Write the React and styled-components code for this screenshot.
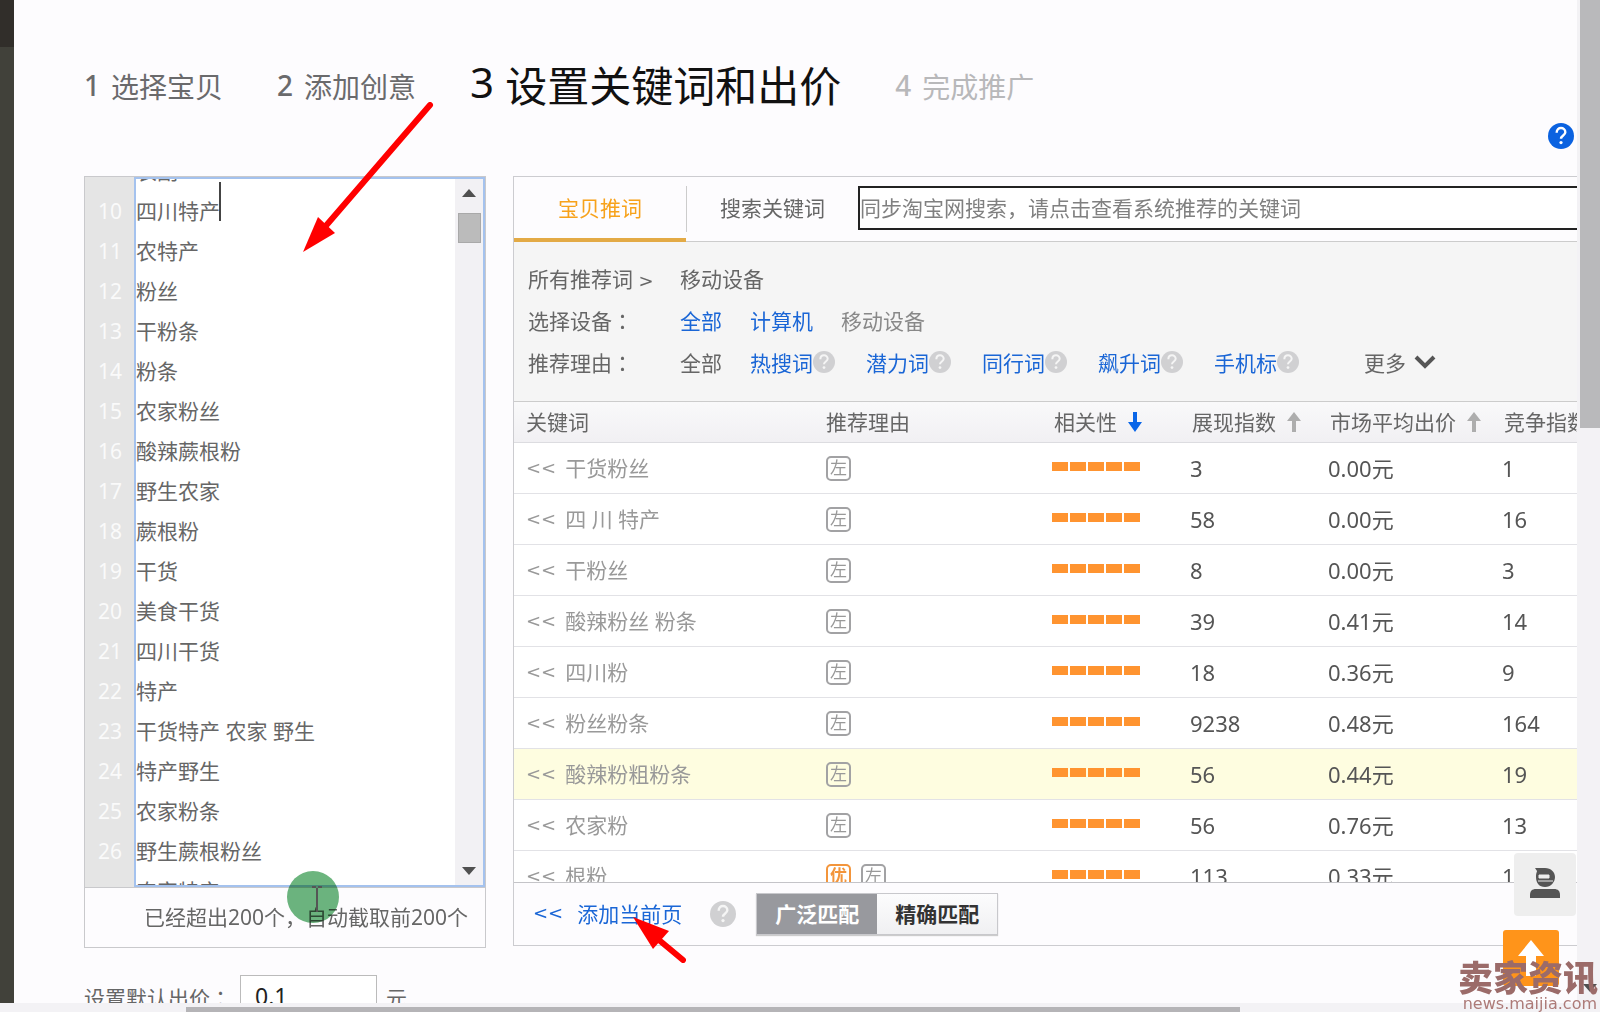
import React, { useEffect, useRef, useState } from 'react';
import styled, { createGlobalStyle } from 'styled-components';

const GlobalStyle = createGlobalStyle`
  * {
    box-sizing: border-box;
  }

  body {
    margin: 0;
    background: #fdfcfe;
    font-family: 'Noto Sans', 'Noto Sans CJK SC', sans-serif;
    font-size: 21px;
    color: #666;
  }

  button, input, textarea {
    font-family: inherit;
    font-size: inherit;
    color: inherit;
    margin: 0;
  }

  a {
    color: #1a66d6;
    text-decoration: none;
  }
`;

const Screen = styled.div`
  position: relative;
  height: 100vh;
  display: grid;
  grid-template-columns: 14px minmax(0, 1fr) 23px;
  grid-template-rows: minmax(0, 1fr) 9px;
  overflow: hidden;
`;

const DarkEdge = styled.div`
  background: #41413a;
  border-top: 47px solid #312e2a;
`;

const Page = styled.main`
  overflow: hidden;
  padding: 43px 0 0 70px;
`;

const PageScroll = styled.div`
  background: #f3f2f5;
  display: flex;
  flex-direction: column;
  align-items: center;
  justify-content: space-between;
  padding: 0 0 11px 3px;
`;

const PageThumb = styled.div`
  align-self: stretch;
  height: 428px;
  background: #b9b9bb;
`;

const BottomScroll = styled.div`
  grid-column: 1 / -1;
  background: #f3f2f5;
  padding: 4px 360px 0 186px;
`;

const BottomThumb = styled.div`
  height: 5px;
  background: #b5b4b7;
`;

const Steps = styled.ol`
  list-style: none;
  display: flex;
  align-items: center;
  height: 80px;
  margin: 0;
  padding: 0;
  white-space: nowrap;
`;

const Step = styled.li`
  display: flex;
  gap: 11px;
  padding-top: ${({ $current }) => ($current ? 0 : 6)}px;
  font-size: ${({ $current }) => ($current ? 42 : 28)}px;
  color: ${({ $current, $todo }) => ($current ? '#111' : $todo ? '#b8b8ba' : '#6a6a6c')};
  margin-right: 54px;
`;

const StepNumber = styled.span`
  font-weight: ${({ $bold }) => ($bold ? 500 : 400)};
`;

const HelpRow = styled.div`
  display: flex;
  justify-content: flex-end;
  align-items: flex-start;
  height: 53px;
  padding-right: 3px;
`;

const HelpButton = styled.button`
  display: flex;
  border: 0;
  padding: 0;
  background: none;
`;

const Columns = styled.div`
  display: grid;
  grid-template-columns: 402px minmax(0, 1fr);
  gap: 27px;
  align-items: start;
`;

const WordPanel = styled.section`
  border: 1px solid #c9c9cc;
`;

const Editor = styled.div`
  display: flex;
  height: 710px;
`;

const Gutter = styled.div`
  width: 49px;
  overflow: hidden;
  display: flex;
  flex-direction: column;
  justify-content: center;
  align-items: flex-end;
  padding: 0 12px 2px 0;
  background: #e5e5e5;
  color: #fafafa;
  line-height: 40px;
`;

const TextBox = styled.div`
  flex: 1;
  display: flex;
  border: 2px solid #a4c2ee;
  background: #fff;
`;

const Words = styled.textarea`
  flex: 1;
  min-width: 0;
  border: 0;
  padding: 0;
  resize: none;
  outline: none;
  overflow: auto;
  scrollbar-width: none;
  background: #fff;
  line-height: 40px;
`;

const Scroller = styled.div`
  width: 28px;
  background: #f2f1f4;
  display: flex;
  flex-direction: column;
  align-items: center;
  padding: 10px 0;
`;

const ScrollThumb = styled.div`
  width: 23px;
  height: 30px;
  margin: 16px 0 auto;
  background: #bbb;
  border: 1px solid #a9a9a9;
`;

const WordFooter = styled.div`
  height: 60px;
  border-top: 1px solid #c9c9cc;
  display: flex;
  align-items: center;
  justify-content: flex-end;
  padding: 0 17px 4px 0;
  white-space: nowrap;
`;

const KeywordPanel = styled.section`
  border: 1px solid #ccccd0;
  border-right: 0;
  overflow: hidden;
`;

const TabBar = styled.div`
  display: flex;
  align-items: center;
  height: 65px;
  border-bottom: 1px solid #ccc;
`;

const Tab = styled.button`
  flex: none;
  width: ${({ $active }) => ($active ? 172 : 171)}px;
  height: 65px;
  border: 0;
  border-bottom: 4px solid ${({ $active }) => ($active ? '#e3aa45' : 'transparent')};
  padding: 0;
  background: none;
  color: ${({ $active }) => ($active ? '#f7a21b' : '#666')};
`;

const TabDivider = styled.span`
  width: 1px;
  height: 46px;
  background: #ccc;
`;

const SearchInput = styled.input`
  flex: 1;
  min-width: 0;
  height: 44px;
  margin-bottom: 3px;
  border: 2px solid #222;
  border-right: 0;
  padding: 0;
  background: #fff;
  outline: none;

  &::placeholder {
    color: #808080;
    opacity: 1;
  }
`;

const Filters = styled.div`
  height: 159px;
  padding: 15px 14px 0;
  background: #f5f5f5;
`;

const FilterRow = styled.div`
  display: flex;
  align-items: center;
  height: 42px;
  white-space: nowrap;
`;

const FilterLabel = styled.span`
  width: 152px;
`;

const Colon = styled.span`
  font-family: 'Noto Sans CJK TC', sans-serif;
  line-height: 1;
`;

const FilterItem = styled.span`
  display: flex;
  align-items: center;
  margin-right: ${({ $wide }) => ($wide ? 31 : 28)}px;
  color: ${({ $muted }) => ($muted ? '#888' : 'inherit')};
`;

const MoreButton = styled.button`
  display: flex;
  align-items: center;
  gap: 8px;
  border: 0;
  padding: 0;
  margin-left: 34px;
  background: none;
`;

const TableBox = styled.div`
  height: 482px;
  overflow: hidden;
  border-top: 1px solid #ccc;
  border-bottom: 1px solid #c4c4c8;
`;

const Table = styled.table`
  width: 100%;
  table-layout: fixed;
  border-collapse: separate;
  border-spacing: 0;
`;

const HeadCell = styled.th`
  width: ${({ $width }) => ($width ? `${$width}px` : 'auto')};
  height: 41px;
  padding: 0 0 0 ${({ $first }) => ($first ? 12 : 14)}px;
  border-bottom: 1px solid #dcdce0;
  background: linear-gradient(#f9f9fa, #f1f0f3);
  font-weight: 400;
  line-height: 30px;
  text-align: left;
  white-space: nowrap;
  overflow: hidden;
`;

const SortLabel = styled.span`
  display: flex;
  align-items: center;
  gap: 11px;
`;

const Row = styled.tr`
  background: ${({ $highlight }) => ($highlight ? '#fefde0' : '#fff')};
`;

const Cell = styled.td`
  height: 51px;
  padding: 0 0 0 12px;
  border-bottom: 1px solid #e2e2e6;
  line-height: 30px;
  font-size: ${({ $number }) => ($number ? 22 : 21)}px;
  color: ${({ $number }) => ($number ? '#555' : '#999')};
  white-space: nowrap;
`;

const Keyword = styled.span`
  display: flex;
  align-items: center;
  gap: 9px;
`;

const Chevrons = styled.span`
  font-family: 'DejaVu Sans', sans-serif;
  font-size: 18px;
  font-weight: 400;
`;

const Tags = styled.span`
  display: flex;
  gap: 10px;
`;

const Tag = styled.span`
  display: flex;
  align-items: center;
  justify-content: center;
  width: 25px;
  height: 25px;
  border: 2px solid ${({ $good }) => ($good ? '#f3953b' : '#a2a2a4')};
  border-radius: 5px;
  color: ${({ $good }) => ($good ? '#f3953b' : '#999')};
  font-size: 17px;
  font-weight: ${({ $good }) => ($good ? 700 : 400)};
`;

const Bars = styled.span`
  display: flex;
  gap: 2px;
  margin-bottom: 4px;
`;

const Bar = styled.i`
  width: 16px;
  height: 9px;
  background: #ff9430;
`;

const PanelFooter = styled.div`
  display: flex;
  align-items: center;
  height: 62px;
  padding-left: 19px;
`;

const AddPage = styled.a`
  display: flex;
  align-items: center;
  gap: 14px;
  margin-right: 28px;
  padding-bottom: 3px;
`;

const MatchGroup = styled.div`
  display: flex;
  margin-left: 20px;
  border: 1px solid #c8c8cc;
  box-shadow: 0 1px 1px #ccc;
`;

const MatchButton = styled.button`
  width: 120px;
  height: 40px;
  border: 0;
  padding: 0 0 3px;
  font-weight: 700;
  background: ${({ $active }) => ($active ? '#98999e' : 'linear-gradient(#fcfcfd, #f0f0f2)')};
  color: ${({ $active }) => ($active ? '#fff' : '#333')};
`;

const PriceRow = styled.div`
  display: flex;
  align-items: center;
  height: 44px;
  margin-top: 27px;
  white-space: nowrap;
`;

const PriceLabel = styled.label`
  width: 156px;
`;

const PriceInput = styled.input`
  width: 137px;
  height: 44px;
  margin-right: 9px;
  border: 1px solid #bbb;
  padding: 0 14px 2px;
  background: #fff;
  color: #222;
  font-size: 23px;
`;

const Floating = styled.div`
  position: absolute;
  right: 24px;
  bottom: 26px;
  display: flex;
  flex-direction: column;
  align-items: flex-end;
  gap: 14px;
`;

const ServiceButton = styled.button`
  display: flex;
  align-items: center;
  justify-content: center;
  width: 62px;
  height: 63px;
  border: 0;
  border-radius: 4px;
  padding: 0 0 4px;
  background: #eee;
`;

const TopButton = styled.button`
  display: flex;
  align-items: center;
  justify-content: center;
  width: 56px;
  height: 56px;
  margin-right: 17px;
  border: 0;
  border-radius: 3px;
  background: #ff941a;
`;

const Watermark = styled.div`
  position: absolute;
  right: 0;
  bottom: 0;
  color: #9b6b69;
  text-align: right;
`;

const WatermarkName = styled.div`
  padding-right: 2px;
  font-size: 35px;
  font-weight: 900;
  line-height: 36px;
`;

const WatermarkUrl = styled.div`
  padding-right: 3px;
  color: #ad7b78;
  font-family: 'DejaVu Sans', sans-serif;
  font-size: 16px;
  line-height: 16px;
`;

const Marks = styled.svg`
  position: absolute;
  left: 0;
  top: 0;
  pointer-events: none;
`;

const ClickSpot = styled.circle`
  mix-blend-mode: multiply;
`;

const words = [
  '农副',
  '四川特产',
  '农特产',
  '粉丝',
  '干粉条',
  '粉条',
  '农家粉丝',
  '酸辣蕨根粉',
  '野生农家',
  '蕨根粉',
  '干货',
  '美食干货',
  '四川干货',
  '特产',
  '干货特产 农家 野生',
  '特产野生',
  '农家粉条',
  '野生蕨根粉丝',
  '农家特产',
  '四川粉条',
];

const lineNumbers = Array.from({ length: 17 }, (_, i) => i + 10);

const reasons = ['热搜词', '潜力词', '同行词', '飙升词', '手机标'];

const rows = [
  { word: '干货粉丝', shows: '3', price: '0.00元', rivals: '1' },
  { word: '四 川 特产', shows: '58', price: '0.00元', rivals: '16' },
  { word: '干粉丝', shows: '8', price: '0.00元', rivals: '3' },
  { word: '酸辣粉丝 粉条', shows: '39', price: '0.41元', rivals: '14' },
  { word: '四川粉', shows: '18', price: '0.36元', rivals: '9' },
  { word: '粉丝粉条', shows: '9238', price: '0.48元', rivals: '164' },
  { word: '酸辣粉粗粉条', shows: '56', price: '0.44元', rivals: '19', highlight: true },
  { word: '农家粉', shows: '56', price: '0.76元', rivals: '13' },
  { word: '根粉', shows: '113', price: '0.33元', rivals: '1', good: true },
];

const HelpIcon = ({ size = 22, color = '#d0d0d2', mark = '#f5f5f5' }) => (
  <svg width={size} height={size} viewBox="0 0 24 24" aria-hidden="true">
    <circle cx="12" cy="12" r="12" fill={color} />
    <path
      d="M8 9c0-6 8-5.500 8-.5 0 3-4 3-4 6"
      fill="none"
      stroke={mark}
      strokeWidth="2.200"
    />
    <circle cx="12" cy="18" r="1.500" fill={mark} />
  </svg>
);

const SortIcon = ({ down }) => (
  <svg width="14" height="20" viewBox="0 0 14 20" aria-hidden="true">
    {down ? (
      <path d="M5 0h4v10h5l-7 10-7-10h5z" fill="#0a66e8" />
    ) : (
      <path d="M5 20h4V9h5L7 0 0 9h5z" fill="#adadad" />
    )}
  </svg>
);

const Triangle = ({ down, color = '#505050' }) => (
  <svg width="14" height="8" viewBox="0 0 14 8" aria-hidden="true">
    <path d={down ? 'M0 0h14L7 8z' : 'M0 8h14L7 0z'} fill={color} />
  </svg>
);

const App = () => {
  const [text, setText] = useState(words.join('\n'));
  const [bid, setBid] = useState('0.1');
  const [match, setMatch] = useState('broad');
  const wordsRef = useRef(null);

  useEffect(() => {
    wordsRef.current.scrollTop = 28;
  }, []);

  return (
    <>
      <GlobalStyle />
      <Screen>
        <DarkEdge />
        <Page>
          <Steps>
            <Step><StepNumber $bold>1</StepNumber>选择宝贝</Step>
            <Step><StepNumber $bold>2</StepNumber>添加创意</Step>
            <Step $current><StepNumber>3</StepNumber>设置关键词和出价</Step>
            <Step $todo><StepNumber $bold>4</StepNumber>完成推广</Step>
          </Steps>
          <HelpRow>
            <HelpButton aria-label="帮助">
              <HelpIcon size={26} color="#0b62e0" mark="#fff" />
            </HelpButton>
          </HelpRow>

          <Columns>
            <WordPanel>
              <Editor>
                <Gutter>
                  {lineNumbers.map((n) => (
                    <span key={n}>{n}</span>
                  ))}
                </Gutter>
                <TextBox>
                  <Words
                    ref={wordsRef}
                    aria-label="关键词"
                    spellCheck="false"
                    value={text}
                    onChange={(e) => setText(e.target.value)}
                  />
                  <Scroller>
                    <Triangle />
                    <ScrollThumb />
                    <Triangle down />
                  </Scroller>
                </TextBox>
              </Editor>
              <WordFooter>已经超出200个，自动截取前200个</WordFooter>
            </WordPanel>

            <KeywordPanel>
              <TabBar>
                <Tab $active>宝贝推词</Tab>
                <TabDivider />
                <Tab>搜索关键词</Tab>
                <SearchInput
                  aria-label="搜索关键词"
                  placeholder="同步淘宝网搜索，请点击查看系统推荐的关键词"
                />
              </TabBar>
              <Filters>
                <FilterRow>
                  <FilterLabel>所有推荐词 <Chevrons>&gt;</Chevrons></FilterLabel>
                  <FilterItem>移动设备</FilterItem>
                </FilterRow>
                <FilterRow>
                  <FilterLabel>选择设备<Colon>：</Colon></FilterLabel>
                  <FilterItem><a href="#all">全部</a></FilterItem>
                  <FilterItem><a href="#pc">计算机</a></FilterItem>
                  <FilterItem $muted>移动设备</FilterItem>
                </FilterRow>
                <FilterRow>
                  <FilterLabel>推荐理由<Colon>：</Colon></FilterLabel>
                  <FilterItem>全部</FilterItem>
                  {reasons.map((reason) => (
                    <FilterItem key={reason} $wide>
                      <a href="#reason">{reason}</a>
                      <HelpIcon />
                    </FilterItem>
                  ))}
                  <MoreButton>
                    更多
                    <svg width="22" height="16" viewBox="0 0 22 16" aria-hidden="true">
                      <path d="M2 3l9 9 9-9" fill="none" stroke="#555" strokeWidth="4" />
                    </svg>
                  </MoreButton>
                </FilterRow>
              </Filters>
              <TableBox>
                <Table>
                  <thead>
                    <tr>
                      <HeadCell $first>关键词</HeadCell>
                      <HeadCell $first $width={226}>推荐理由</HeadCell>
                      <HeadCell $width={138}><SortLabel>相关性<SortIcon down /></SortLabel></HeadCell>
                      <HeadCell $width={138}><SortLabel>展现指数<SortIcon /></SortLabel></HeadCell>
                      <HeadCell $width={174}><SortLabel>市场平均出价<SortIcon /></SortLabel></HeadCell>
                      <HeadCell $width={87}>竞争指数</HeadCell>
                    </tr>
                  </thead>
                  <tbody>
                    {rows.map((row) => (
                      <Row key={row.word} $highlight={row.highlight}>
                        <Cell>
                          <Keyword><Chevrons>&lt;&lt;</Chevrons>{row.word}</Keyword>
                        </Cell>
                        <Cell>
                          <Tags>
                            {row.good && <Tag $good>优</Tag>}
                            <Tag>左</Tag>
                          </Tags>
                        </Cell>
                        <Cell>
                          <Bars><Bar /><Bar /><Bar /><Bar /><Bar /></Bars>
                        </Cell>
                        <Cell $number>{row.shows}</Cell>
                        <Cell $number>{row.price}</Cell>
                        <Cell $number>{row.rivals}</Cell>
                      </Row>
                    ))}
                  </tbody>
                </Table>
              </TableBox>
              <PanelFooter>
                <AddPage href="#add">
                  <Chevrons>&lt;&lt;</Chevrons>
                  添加当前页
                </AddPage>
                <HelpIcon size={26} />
                <MatchGroup>
                  <MatchButton $active={match === 'broad'} onClick={() => setMatch('broad')}>
                    广泛匹配
                  </MatchButton>
                  <MatchButton $active={match === 'exact'} onClick={() => setMatch('exact')}>
                    精确匹配
                  </MatchButton>
                </MatchGroup>
              </PanelFooter>
            </KeywordPanel>
          </Columns>

          <PriceRow>
            <PriceLabel htmlFor="bid">设置默认出价<Colon>：</Colon></PriceLabel>
            <PriceInput id="bid" value={bid} onChange={(e) => setBid(e.target.value)} />
            元
          </PriceRow>
        </Page>
        <PageScroll>
          <PageThumb />
          <Triangle down />
        </PageScroll>
        <BottomScroll>
          <BottomThumb />
        </BottomScroll>

        <Floating>
          <ServiceButton aria-label="客服">
            <svg width="30" height="32" viewBox="0 0 30 32" aria-hidden="true">
              <path d="M5 1h10c6 0 10 4 10 9s-4 10-10 10S6 16 6 10c0-4 1-5 1-6z" fill="#555" />
              <path d="M9 8h10v3H9zM8 14h15" fill="#eee" stroke="#eee" strokeWidth="1" />
              <path d="M0 31v-3c0-4 2-6 6-6h18c4 0 6 2 6 6v3z" fill="#555" />
            </svg>
          </ServiceButton>
          <TopButton aria-label="返回顶部">
            <svg width="26" height="36" viewBox="0 0 26 36" aria-hidden="true">
              <path d="M13 0l13 16h-8v20H8V16H0z" fill="#fff" />
            </svg>
          </TopButton>
        </Floating>

        <Watermark>
          <WatermarkName>卖家资讯</WatermarkName>
          <WatermarkUrl>news.maijia.com</WatermarkUrl>
        </Watermark>

        <Marks width="1600" height="1012" viewBox="0 0 1600 1012" aria-hidden="true">
          <path d="M220 182v39" stroke="#444" strokeWidth="2" />
          <ClickSpot cx="313" cy="897" r="26" fill="#6cb57e" />
          <path d="M312 887h4m2 0h4M317 888v24" stroke="#555" strokeWidth="2" fill="none" />
          <path d="M430 105L324 228" stroke="#f00" strokeWidth="6" strokeLinecap="round" />
          <path d="M303 252l15-35 17 16z" fill="#f00" />
          <path d="M683 960l-24-20" stroke="#f00" strokeWidth="6" strokeLinecap="round" />
          <path d="M633 917l36 14-16 18z" fill="#f00" />
        </Marks>
      </Screen>
    </>
  );
};

export default App;
